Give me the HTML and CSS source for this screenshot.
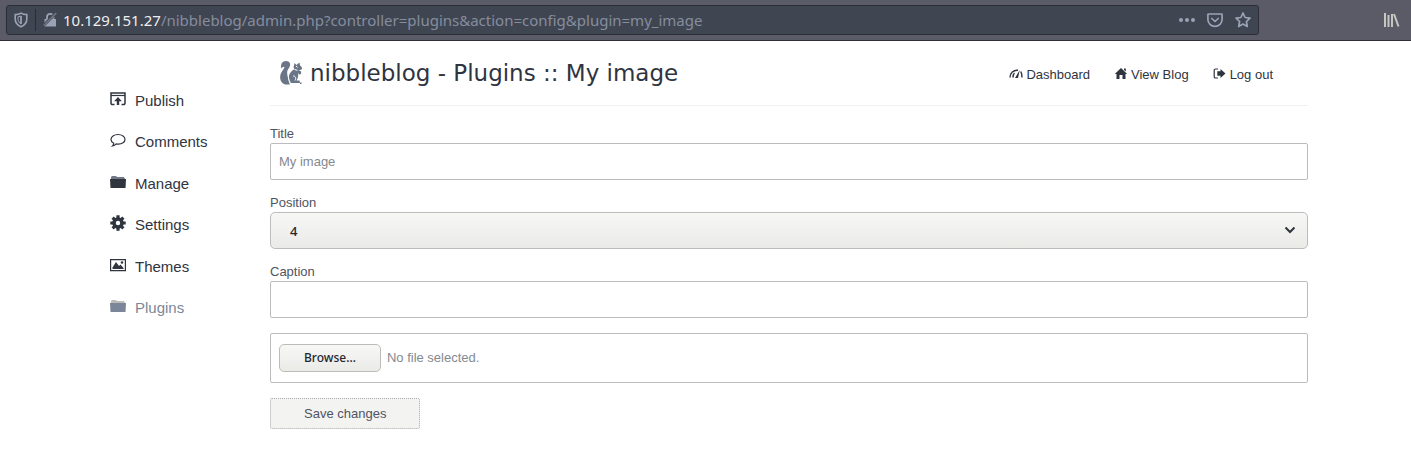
FILE: index.html
```html
<!DOCTYPE html>
<html lang="en">
<head>
<meta charset="utf-8">
<meta name="viewport" content="width=device-width, initial-scale=1">
<title>nibbleblog - Plugins :: My image</title>
<link rel="stylesheet" href="styles.css">
</head>
<body>
<div class="toolbar">
  <div class="urlbar">
    <button class="tool shield" type="button" aria-label="Tracking protection"><svg width="14" height="16" viewBox="0 0 14 16"><path d="M7 1.200C5.500 2.200 3.200 2.600 1.200 2.600V7c0 3.600 2.200 6.200 5.800 7.800C10.600 13.200 12.800 10.600 12.800 7V2.600C10.800 2.600 8.500 2.200 7 1.200z" fill="none" stroke="currentColor" stroke-width="1.600"/><path d="M7 4v8c-2-1.200-3-3-3-5V4.800z" fill="none" stroke="currentColor"/><path d="M7 4v8" stroke="currentColor" stroke-width="1.500"/></svg></button>
    <button class="tool lock" type="button" aria-label="Connection is not secure"><svg width="14" height="16" viewBox="0 0 14 16"><path d="M4 7V5a3.200 3.200 0 0 1 6.400 0v2" fill="none" stroke="currentColor" stroke-width="1.800"/><path d="M1.500 7h11.500v7.500H1.500z" fill="currentColor"/><path d="M.5 13.500L13 1" stroke="#404552" stroke-width="3"/><path d="M.8 13.500L13.300 1" stroke="#747986" stroke-width="1.500"/></svg></button>
    <span class="address"><span class="host">10.129.151.27</span>/nibbleblog/admin.php?controller=plugins&amp;action=config&amp;plugin=my_image</span>
    <span class="actions">
      <button class="tool" type="button" aria-label="Page actions"><svg width="16" height="16" viewBox="0 0 16 16" fill="currentColor"><circle cx="2" cy="8" r="2"/><circle cx="8" cy="8" r="2"/><circle cx="14" cy="8" r="2"/></svg></button>
      <button class="tool" type="button" aria-label="Save to Pocket"><svg width="16" height="16" viewBox="0 0 16 16" fill="none" stroke="currentColor" stroke-width="1.700" stroke-linecap="round" stroke-linejoin="round"><path d="M1.500 2h13a.6.600 0 0 1 .6.600V7.500a7.100 6.800 0 0 1-14.200 0V2.600A.6.600 0 0 1 1.500 2z"/><path d="M4.800 6.500L8 9.500l3.200-3"/></svg></button>
      <button class="tool" type="button" aria-label="Bookmark this page"><svg width="16" height="16" viewBox="0 0 16 16" fill="none" stroke="currentColor" stroke-width="1.700" stroke-linejoin="round"><path d="M8 1l2.100 4.500 4.900.6-3.600 3.400.9 5L8 12.100l-4.300 2.400.9-5L1 6.100l4.900-.6z"/></svg></button>
    </span>
  </div>
  <button class="tool library" type="button" aria-label="Library"><svg width="16" height="16" viewBox="0 0 16 16" fill="none" stroke="currentColor" stroke-width="2"><path d="M1 1v14M4.500 3v12M8 2v13"/><path d="M10 2l4.500 12.500"/></svg></button>
</div>

<div class="page">
  <nav class="sidebar" aria-label="Administration">
    <a href="#"><svg width="16" height="16" viewBox="0 0 16 16" fill="none" stroke="currentColor" stroke-width="1.500"><path d="M4.500 13.500H2.200A1.200 1.200 0 0 1 1 12.300V2h14v10.300a1.200 1.200 0 0 1-1.200 1.200h-2.300"/><path d="M1 4.500h14" stroke-width="1.200"/><path d="M8 6l3.900 4.200H9.200V14H6.800v-3.800H4.100z" fill="currentColor" stroke="none"/></svg>Publish</a>
    <a href="#"><svg width="16" height="16" viewBox="0 0 16 16" fill="none" stroke="currentColor" stroke-width="1.200"><path d="M8 2.500c4 0 7 2.100 7 4.900s-3 4.800-6.600 4.800c-.8 0-1.500-.1-2.200-.3-1 1.200-2.200 1.900-3.700 2.100.8-.8 1.200-1.700 1.200-2.800C1.900 10.300 1 9 1 7.400 1 4.600 4 2.500 8 2.500z"/></svg>Comments</a>
    <a href="#"><svg width="16" height="16" viewBox="0 0 16 16"><path d="M1 5V3l1-1h4l1 1h7l1 2z" fill="#727987"/><path d="M0 5h16l-.5 9H.5z" fill="currentColor"/></svg>Manage</a>
    <a href="#"><svg width="16" height="16" viewBox="0 0 16 16"><g fill="none" stroke="currentColor"><circle cx="8" cy="8" r="4" stroke-width="3.600"/><path d="M8 .3v3M8 12.700v3M.3 8h3M12.700 8h3M2.600 2.600l2.100 2.100M11.300 11.300l2.100 2.100M13.400 2.600l-2.100 2.100M4.700 11.300l-2.100 2.100" stroke-width="3.200"/></g></svg>Settings</a>
    <a href="#"><svg width="16" height="16" viewBox="0 0 16 16"><path d="M.6 2.600h14.800v11H.6z" fill="none" stroke="currentColor" stroke-width="1.200"/><path d="M2.500 12V10.500L6 5l3 4 1.500-1.500 3 3.500v1z" fill="currentColor"/><circle cx="12" cy="5.500" r="1.300" fill="currentColor"/></svg>Themes</a>
    <a class="current" href="#" aria-current="page"><svg width="16" height="16" viewBox="0 0 16 16"><path d="M1 5V3l1-1h4l1 1h7l1 2z" fill="#bcbcb8"/><path d="M0 5h16l-.5 9H.5z" fill="currentColor"/></svg>Plugins</a>
  </nav>

  <main class="content">
    <header class="header">
      <svg class="logo" width="24" height="26" viewBox="0 0 24 26" fill="#6b7588"><path d="M2.500 8.500C1 4 3.500 1 7 1c4 0 5 3.500 3.500 6C9 9.500 7.500 11 8.500 15c.6 3 1 6.500 2.500 9.500H6.500C1.500 23.500.5 18 1.500 14.500 2.300 11.500 5 9.500 5.500 7c-1-.8-2 .3-3 1.500z"/><path d="M15 5.500l.5-2.500 2 2 3-2.500.5 3c1.500 1 2.300 2.200 2 3.500-1 1-2.500 1.200-3.500 1.200l2.700 1.300-.2 2.500-2 .5-1-1.500c.5 3 0 5-1.500 7.500h3l.5 2.500h-9C9.500 21 9 16 11.500 12.500c1.200-1.600 2.500-2.500 4-3.500-1-1-1.200-2.300-.5-3.500z"/><path d="M14 16c2.500 0 3.500 2 2 4.500M15.500 9.500l3 .8M17 6l1.500 1.500M10.500 11c-2 3-1.500 7 .5 11" fill="none" stroke="#fff"/><path d="M21 22.500h1.500V24H21z"/></svg>
      <h1>nibbleblog - Plugins :: My image</h1>
      <nav class="shortcuts" aria-label="Shortcuts">
        <a href="#"><svg width="14" height="14" viewBox="0 0 14 14" fill="none" stroke="currentColor" stroke-width="1.400"><path d="M1 10.500C1 6 4.500 2.800 9 3.300M4 10.500c0-2 .4-3.500 1.500-4.500M11.800 4.500c.8 1.600 1.200 3.500 1.200 6"/><path d="M6 11L10.800 3 9 11z" fill="currentColor" stroke="none"/></svg>Dashboard</a>
        <a href="#"><svg width="14" height="14" viewBox="0 0 14 14" fill="currentColor"><path d="M7 1l6.200 6H11.500v5H8.500V8h-3v4h-3V7H.8zM10 1.500h1.800v3L10 3z"/></svg>View Blog</a>
        <a href="#"><svg width="14" height="14" viewBox="0 0 14 14"><path d="M5 2H2.500a1.300 1.300 0 0 0-1.300 1.300v6.400A1.300 1.300 0 0 0 2.500 11H5" fill="none" stroke="currentColor" stroke-width="1.200"/><path d="M7.500 2l5 4.500-5 4.500V8.700H4.300V4.300h3.200z" fill="currentColor"/></svg>Log out</a>
      </nav>
    </header>

    <form class="form">
      <div class="field">
        <label for="title">Title</label>
        <input class="box" id="title" type="text" value="My image">
      </div>
      <div class="field">
        <label for="position">Position</label>
        <div class="select">
          <select class="box" id="position"><option>4</option></select>
          <svg class="arrow" width="12" height="8" viewBox="0 0 12 8"><path d="M1.500 1.500L6 6l4.500-4.500" fill="none" stroke="currentColor" stroke-width="2"/></svg>
        </div>
      </div>
      <div class="field">
        <label for="caption">Caption</label>
        <input class="box" id="caption" type="text">
      </div>
      <div class="upload">
        <label class="browse" for="file">Browse…</label>
        <span>No file selected.</span>
        <input class="file" id="file" type="file">
      </div>
      <button class="save" type="submit">Save changes</button>
    </form>
  </main>
</div>
</body>
</html>
```
FILE: styles.css
```css
* { box-sizing: border-box; }
body {
  margin: 0;
  background: #fff;
  color: #2f343f;
  font: 13px/16px "Liberation Sans", Arial, sans-serif;
}
svg { display: block; flex: none; }
a { color: inherit; text-decoration: none; }
button { font: inherit; color: inherit; }

.toolbar {
  display: flex;
  align-items: center;
  height: 41px;
  padding: 0 11px 0 6px;
  background: #5b5a67;
  border-bottom: 1px solid #2f2f3b;
}
.urlbar {
  display: flex;
  align-items: center;
  flex: 1;
  height: 30px;
  padding: 0 7px;
  margin-right: 125px;
  background: #404552;
  border: 1px solid #2b2e39;
  border-radius: 3px;
}
.tool {
  display: block;
  padding: 0;
  border: 0;
  background: none;
  color: #99a3b5;
}
.shield { padding-right: 7px; }
.lock {
  padding: 3px 0 3px 7px;
  border-left: 1px solid #2b2e39;
}
.address {
  flex: 1;
  padding-left: 6px;
  font: 15px/20px "Noto Sans", sans-serif;
  color: #858d9e;
  white-space: nowrap;
}
.host { color: #eeeeec; }
.actions { display: flex; gap: 12px; }
.library { color: #c6c6c3; }

.page {
  display: flex;
  align-items: flex-start;
  padding: 0 103px 24px 110px;
}
.sidebar {
  display: flex;
  flex-direction: column;
  justify-content: space-between;
  flex: none;
  width: 160px;
  min-height: 277px;
  padding-top: 50px;
}
.sidebar a {
  display: flex;
  gap: 9px;
  font-size: 15px;
  line-height: 20px;
}
.sidebar .current { color: #7b8799; }

.content { flex: 1; min-width: 0; }
.header {
  display: flex;
  align-items: center;
  height: 65px;
  padding: 0 35px 0 9px;
  border-bottom: 1px solid #f0f0f0;
}
h1 {
  flex: 1;
  margin: 0 0 0 7px;
  font: 23px/28px "DejaVu Sans", sans-serif;
}
.shortcuts { display: flex; gap: 24px; padding-top: 3px; }
.shortcuts a { display: flex; gap: 3px; }

.form {
  display: flex;
  flex-direction: column;
  align-items: stretch;
  gap: 15px;
  padding-top: 20px;
  color: #4f5462;
}
.field label { display: block; margin-bottom: 1px; }
.box {
  display: block;
  width: 100%;
  height: 37px;
  padding: 0 8px;
  border: 1px solid #bcbcbc;
  border-radius: 2px;
  background: #fff;
  font: inherit;
  color: #84898f;
}
.select { position: relative; }
.select .box {
  appearance: none;
  padding: 0 19px;
  border-radius: 5px;
  background: linear-gradient(#f7f7f6, #eaebe7);
  font: 500 13px/16px "Noto Sans", sans-serif;
  color: #23262f;
}
.arrow {
  position: absolute;
  top: 14px;
  right: 12px;
  color: #2f343f;
  pointer-events: none;
}
.upload {
  position: relative;
  display: flex;
  align-items: center;
  gap: 6px;
  height: 50px;
  padding: 0 8px;
  border: 1px solid #bcbcbc;
  border-radius: 2px;
  color: #84898f;
}
.browse {
  padding: 5px 24px;
  border: 1px solid #bcbcb8;
  border-radius: 5px;
  background: linear-gradient(#f7f7f6, #eaebe7);
  font: 500 12px/16px "Noto Sans", sans-serif;
  color: #23262f;
}
.file {
  position: absolute;
  inset: 0;
  width: 100%;
  opacity: 0;
}
.save {
  align-self: flex-start;
  padding: 7px 33px;
  border: 1px dotted #aaa;
  border-radius: 2px;
  background: #f3f3f2;
  line-height: 15px;
}
```
